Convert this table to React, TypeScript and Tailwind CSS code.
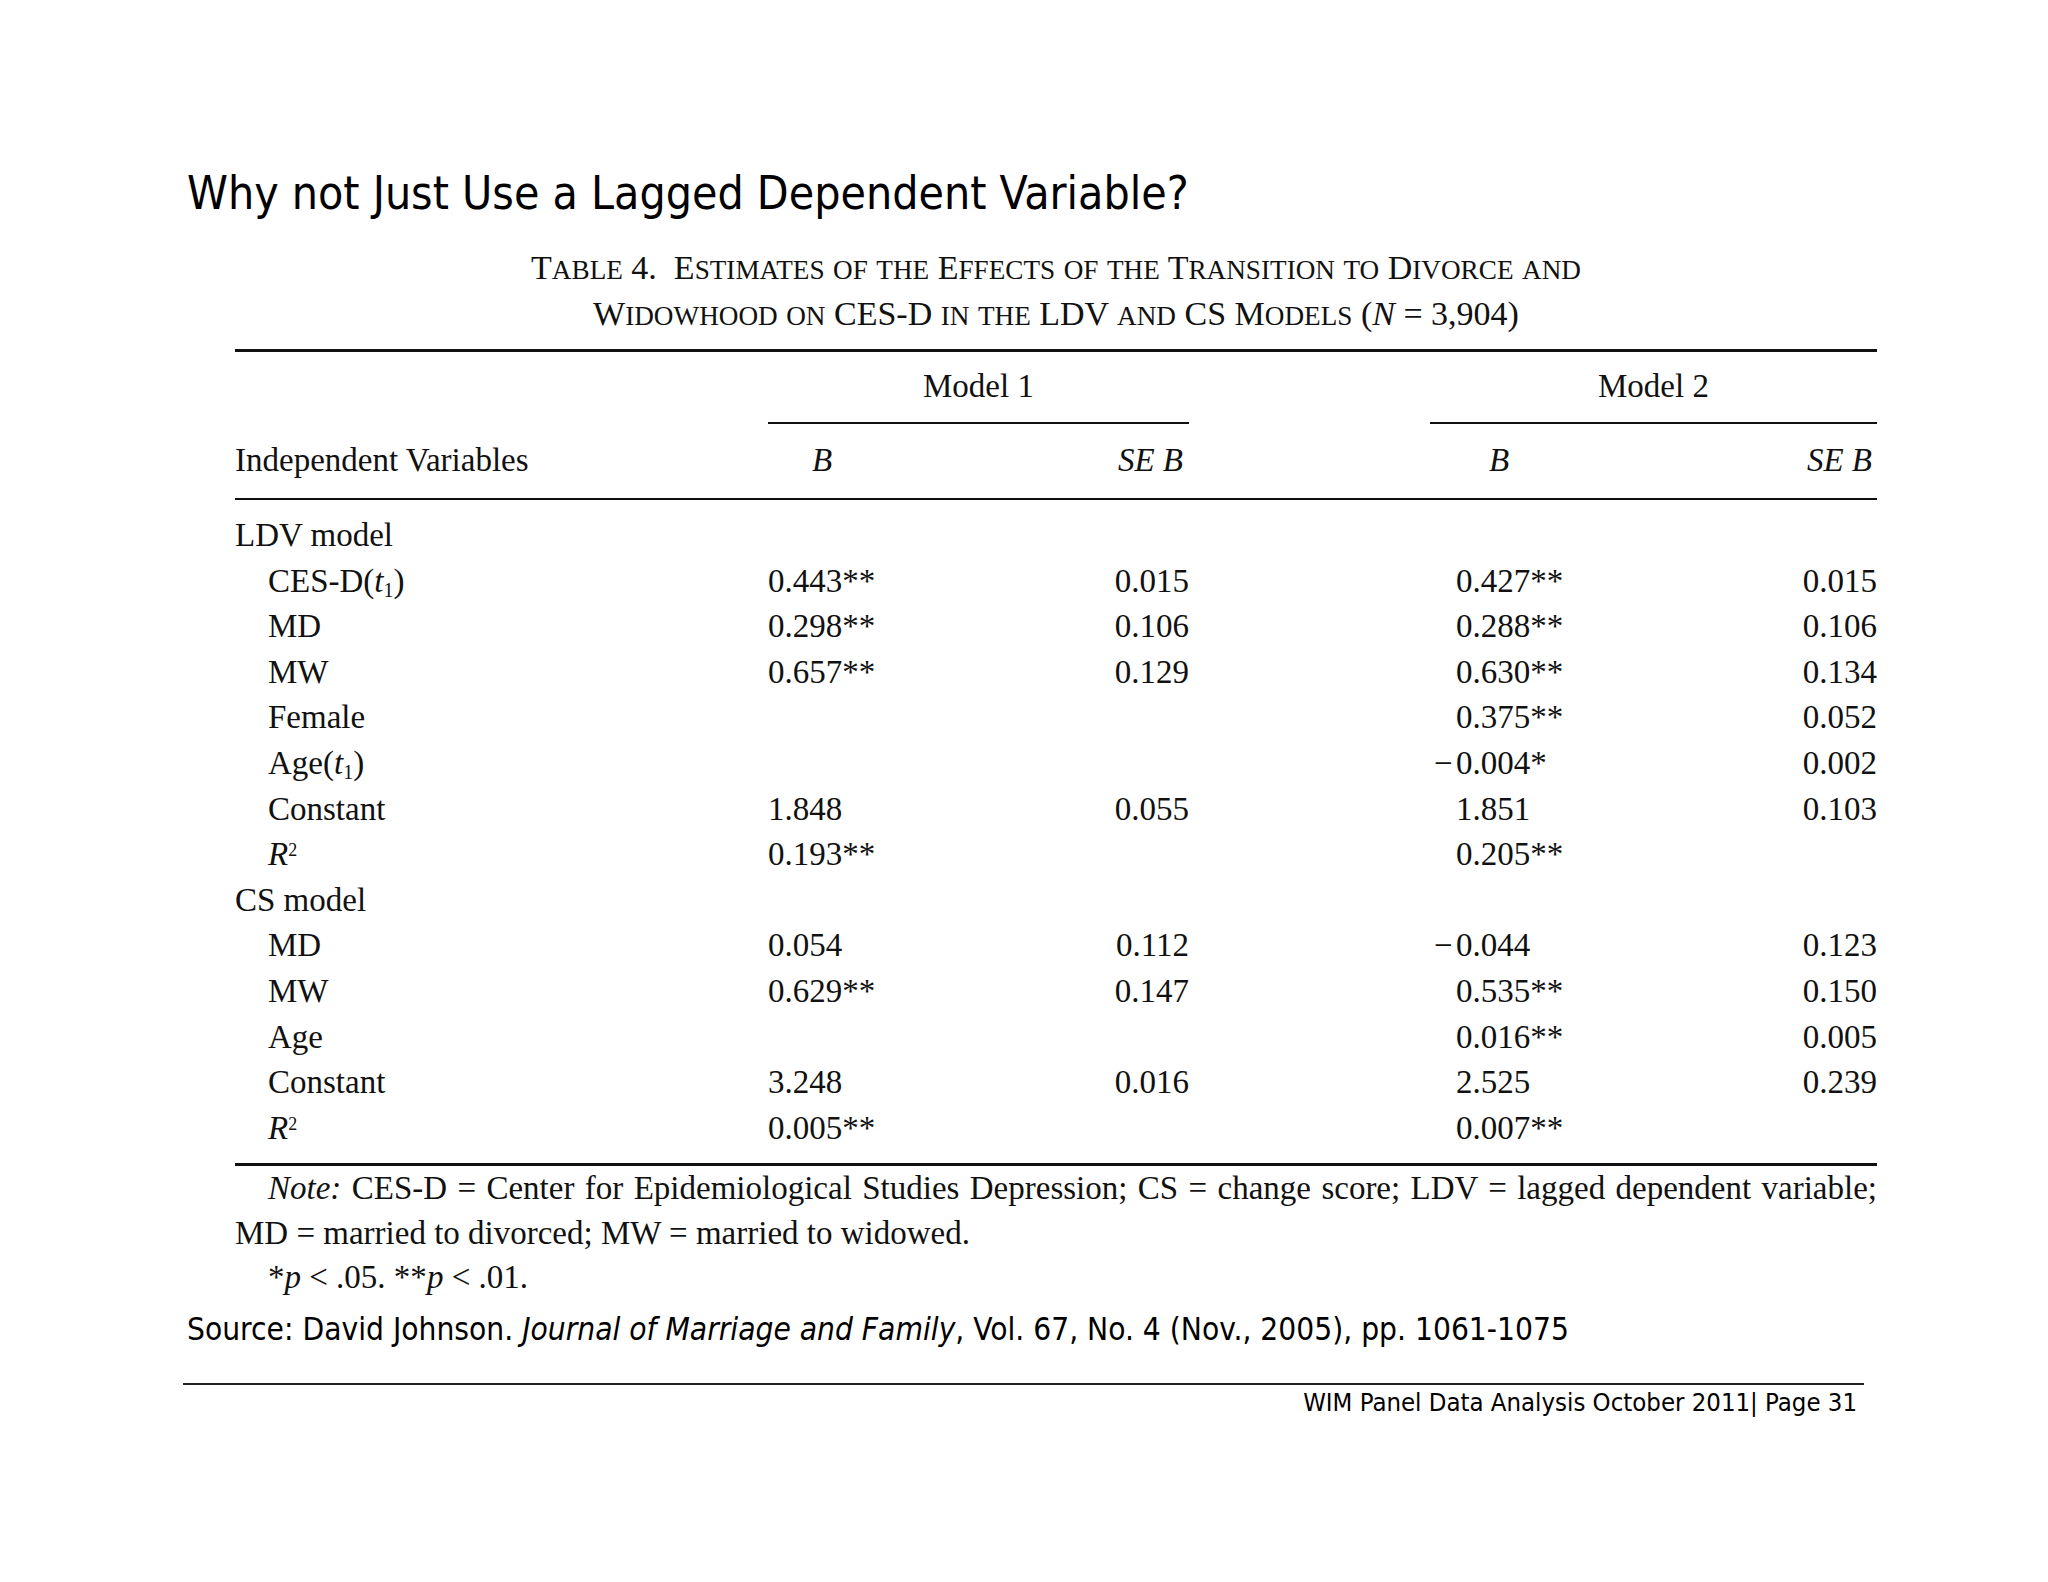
import React from 'react';

const serif = "font-['Liberation_Serif','Times_New_Roman',serif]";
const sans = "font-['DejaVu_Sans_Condensed','DejaVu_Sans',sans-serif]";

const cols = 'grid grid-cols-[533px_240px_181px_241px_300px_147px]';

type Row = {
  label: React.ReactNode;
  group?: boolean;
  b1?: string;
  se1?: string;
  b2?: string;
  se2?: string;
};

const T1 = (name: string) => (
  <>
    {name}(<i>t</i>
    <sub className="text-[20px]">1</sub>)
  </>
);

const R2 = (
  <>
    <i>R</i>
    <sup className="text-[18px]">2</sup>
  </>
);

const rows: Row[] = [
  { label: 'LDV model', group: true },
  { label: T1('CES-D'), b1: '0.443**', se1: '0.015', b2: '0.427**', se2: '0.015' },
  { label: 'MD', b1: '0.298**', se1: '0.106', b2: '0.288**', se2: '0.106' },
  { label: 'MW', b1: '0.657**', se1: '0.129', b2: '0.630**', se2: '0.134' },
  { label: 'Female', b2: '0.375**', se2: '0.052' },
  { label: T1('Age'), b2: '−0.004*', se2: '0.002' },
  { label: 'Constant', b1: '1.848', se1: '0.055', b2: '1.851', se2: '0.103' },
  { label: R2, b1: '0.193**', b2: '0.205**' },
  { label: 'CS model', group: true },
  { label: 'MD', b1: '0.054', se1: '0.112', b2: '−0.044', se2: '0.123' },
  { label: 'MW', b1: '0.629**', se1: '0.147', b2: '0.535**', se2: '0.150' },
  { label: 'Age', b2: '0.016**', se2: '0.005' },
  { label: 'Constant', b1: '3.248', se1: '0.016', b2: '2.525', se2: '0.239' },
  { label: R2, b1: '0.005**', b2: '0.007**' },
];

// small caps drawn by hand: capital first letter, the rest smaller
function SC({ text }: { text: string }) {
  return (
    <>
      {text.split(/(\s+)/).map((w, i) => {
        if (/^\s+$/.test(w) || w === '') return w;
        const first = w[0];
        const rest = w.slice(1);
        if (first === first.toUpperCase() && /[A-Za-z]/.test(first)) {
          return (
            <span key={i}>
              {first}
              <span className="text-[0.8em]">{rest.toUpperCase()}</span>
            </span>
          );
        }
        return (
          <span key={i} className="text-[0.8em]">
            {w.toUpperCase()}
          </span>
        );
      })}
    </>
  );
}

function Signed({ value }: { value?: string }) {
  if (!value) return null;
  const neg = value.startsWith('−');
  return (
    <>
      <span className="inline-block w-[26px] pl-[4px]">{neg ? '−' : ''}</span>
      {neg ? value.slice(1) : value}
    </>
  );
}

export default function App() {
  return (
    <div className="w-[2048px] h-[1582px] bg-white text-black overflow-hidden">
      <div className="pl-[187px] pt-[165px]">
        <h1 className={`${sans} text-[46px] leading-[56px] h-[56px] font-normal whitespace-nowrap`}>
          Why not Just Use a Lagged Dependent Variable?
        </h1>

        <div className={`${serif} ml-[48px] w-[1642px] text-[#111] text-[33px]`}>
          <div className="mt-[25px] text-center text-[34px] leading-[44px] whitespace-nowrap">
            <div>
              <SC text="Table" /> 4.&nbsp; <SC text="Estimates of the Effects of the Transition to Divorce and" />
            </div>
            <div>
              <SC text="Widowhood on" /> CES-D <SC text="in the" /> LDV <SC text="and" /> CS <SC text="Models" /> (<i>N</i> = 3,904)
            </div>
          </div>

          <div className="mt-[11px] border-t-[3px] border-[#111]">
            <div className={`${cols} h-[72px]`}>
              <div />
              <div className="col-span-2 flex items-center justify-center border-b-2 border-[#111]">Model 1</div>
              <div />
              <div className="col-span-2 flex items-center justify-center border-b-2 border-[#111]">Model 2</div>
            </div>
            <div className={`${cols} h-[76px] items-center border-b-2 border-[#111]`}>
              <div>Independent Variables</div>
              <div className="pl-[44px] italic">B</div>
              <div className="pr-[6px] text-right italic">SE B</div>
              <div />
              <div className="pl-[59px] italic">B</div>
              <div className="pr-[5px] text-right italic">SE B</div>
            </div>

            <div className="pt-[11px] pb-[14px] border-b-[3px] border-[#111]">
              {rows.map((r, i) => (
                <div key={i} className={`${cols} h-[45.6px] items-center whitespace-nowrap`}>
                  <div className={r.group ? '' : 'pl-[33px]'}>{r.label}</div>
                  <div>{r.b1}</div>
                  <div className="text-right">{r.se1}</div>
                  <div />
                  <div>
                    <Signed value={r.b2} />
                  </div>
                  <div className="text-right">{r.se2}</div>
                </div>
              ))}
            </div>

            <div className="leading-[44.5px]">
              <div className="pl-[33px] text-justify [text-align-last:justify] whitespace-nowrap">
                <i>Note:</i> CES-D = Center for Epidemiological Studies Depression; CS = change score; LDV = lagged dependent variable;
              </div>
              <div>MD = married to divorced; MW = married to widowed.</div>
              <div className="pl-[33px]">
                *<i>p</i> &lt; .05. **<i>p</i> &lt; .01.
              </div>
            </div>
          </div>
        </div>

        <p className={`${sans} mt-[8px] text-[31.4px] leading-[42px] whitespace-nowrap`}>
          Source: David Johnson. <i>Journal of Marriage and Family</i>, Vol. 67, No. 4 (Nov., 2005), pp. 1061-1075
        </p>
      </div>

      <div className="ml-[183px] w-[1681px] mt-[33px] border-t-2 border-[#222] pr-[7px]">
        <p className={`${sans} text-right text-[25.5px] leading-[34px]`}>
          WIM Panel Data Analysis October 2011| Page 31
        </p>
      </div>
    </div>
  );
}
